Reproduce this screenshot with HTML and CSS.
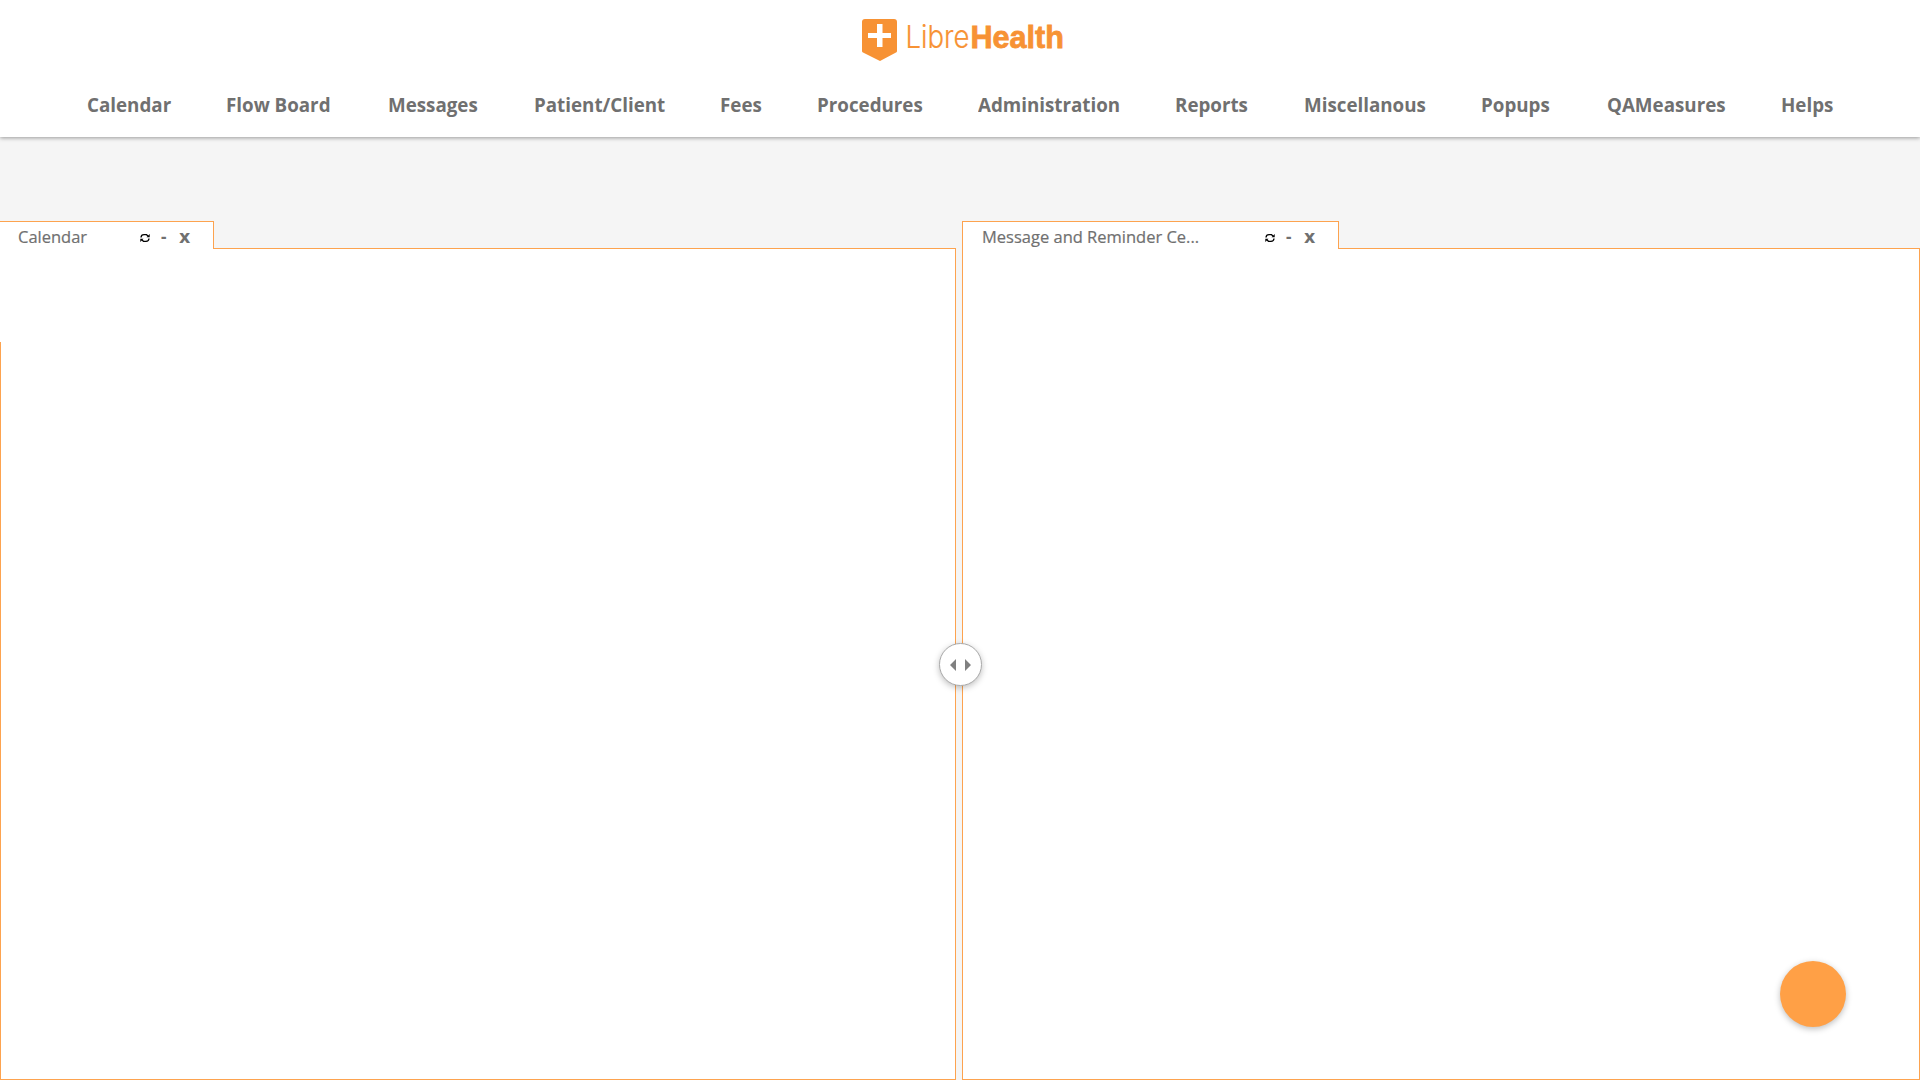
FILE: index.html
```html
<!DOCTYPE html>
<html lang="en">
<head>
<meta charset="utf-8">
<title>LibreHealth</title>
<link rel="stylesheet" href="styles.css">
</head>
<body>
<header class="header">
  <svg class="logo" viewBox="0 0 202 44" role="img" aria-label="LibreHealth">
    <path d="M3 1H32Q35 1 35 4V33Q35 34 34 34.500L18 43L1 34.500Q0 34 0 33V4Q0 1 3 1Z"/>
    <path class="logo-cross" d="M15 6H20.500V15H29V20H20.500V29H15V20H6V15H15Z"/>
    <text class="logo-light" x="43.500" y="29.500" textLength="64" lengthAdjust="spacingAndGlyphs">Libre</text>
    <text class="logo-bold" x="108.500" y="29.500" textLength="93.500" lengthAdjust="spacingAndGlyphs">Health</text>
  </svg>
  <nav class="nav">
    <a>Calendar</a><a>Flow Board</a><a>Messages</a><a>Patient/Client</a><a>Fees</a><a>Procedures</a><a>Administration</a><a>Reports</a><a>Miscellanous</a><a>Popups</a><a>QAMeasures</a><a>Helps</a>
  </nav>
</header>
<main class="workspace">
  <section class="pane pane-left">
    <div class="tab">
      <span class="title">Calendar</span>
      <svg class="refresh" viewBox="0 0 10 10"><path class="arc" d="M1 4.500Q1.200 1.700 4 1.700H6.500L8 3M9 5.500Q8.800 8.300 6 8.300H3.500L2 7"/><path d="M9.700 1V4.300H6.500ZM.3 9V5.700H3.500Z"/></svg>
      <span class="minimize">-</span><span class="close">x</span>
    </div>
    <div class="frame"></div>
  </section>
  <section class="pane pane-right">
    <div class="tab">
      <span class="title">Message and Reminder Ce...</span>
      <svg class="refresh" viewBox="0 0 10 10"><path class="arc" d="M1 4.500Q1.200 1.700 4 1.700H6.500L8 3M9 5.500Q8.800 8.300 6 8.300H3.500L2 7"/><path d="M9.700 1V4.300H6.500ZM.3 9V5.700H3.500Z"/></svg>
      <span class="minimize">-</span><span class="close">x</span>
    </div>
    <div class="frame"></div>
  </section>
</main>
<div class="splitter"><svg viewBox="0 0 21 12"><path d="M6 0V12L0 6ZM15 0V12L21 6Z"/></svg></div>
<div class="fab"></div>
</body>
</html>
```
FILE: styles.css
```css
* { box-sizing: border-box; }
body {
  margin: 0;
  height: 1080px;
  overflow: hidden;
  display: flex;
  flex-direction: column;
  position: relative;
  background: #f5f5f5;
  color: #707070;
  font-family: "Open Sans", "Noto Sans", sans-serif;
}
.header {
  height: 137px;
  flex: none;
  background: #fff;
  box-shadow: 0 1px 4px rgba(0, 0, 0, .38);
  padding-top: 18px;
}
.logo { display: block; width: 202px; height: 44px; margin-left: 862px; fill: #f79234; overflow: visible; }
.logo .logo-cross { fill: #fff; }
.logo text { font-family: "Liberation Sans", sans-serif; font-size: 32px; }
.logo .logo-light { font-family: Inter, sans-serif; font-size: 31.5px; font-weight: 300; stroke: #f79234; stroke-width: .2px; }
.logo-bold { font-weight: 700; stroke: #f79234; stroke-width: .8px; }
.nav {
  display: grid;
  grid-template-columns: 83px 106px 90px 130px 41px 105px 141px 73px 121px 70px 118px 53px;
  column-gap: 56px;
  padding-left: 87px;
  margin-top: 28px;
  font-size: 20px;
  font-weight: 700;
  line-height: 30px;
  white-space: nowrap;
}
.nav a { justify-self: start; transform: scaleX(.938); transform-origin: left; }
.workspace { flex: 1; display: flex; gap: 6px; padding-top: 84px; }
.pane { display: flex; flex-direction: column; }
.pane-left { width: 956px; }
.pane-right { width: 958px; }
.tab {
  height: 28px;
  margin-bottom: -1px;
  z-index: 1;
  display: flex;
  align-items: flex-start;
  background: #fff;
  border: 1px solid #fda34f;
  border-bottom: 0;
  font-size: 17px;
  line-height: 30px;
  white-space: nowrap;
}
.pane-left .tab { width: 214px; border-left: 0; padding-left: 18px; }
.pane-right .tab { width: 377px; padding-left: 19px; }
.title { transform: scaleX(.97); transform-origin: left; -webkit-text-stroke: .2px #707070; }
.pane-left .title { width: 122px; }
.pane-right .title { width: 283px; }
.refresh { width: 10px; height: 10px; margin-top: 11px; fill: #000; }
.refresh .arc { fill: none; stroke: #000; stroke-width: 1.3; }
.minimize { width: 18px; margin-left: 11px; font-weight: 700; }
.close { font-family: "DejaVu Sans", sans-serif; font-weight: 700; font-size: 17.5px; }
.frame { flex: 1; background: #fff; border: 1px solid #fda34f; }
.pane-left .frame {
  border-left: 0;
  background: linear-gradient(#fda34f, #fda34f) 0 93px / 1px 100% no-repeat #fff;
}
.splitter {
  position: absolute;
  z-index: 2;
  left: 939px;
  top: 643px;
  width: 43px;
  height: 43px;
  display: flex;
  align-items: center;
  justify-content: center;
  border: 1px solid #aaa;
  border-radius: 50%;
  background: #fff;
  box-shadow: 0 2px 6px rgba(0, 0, 0, .25);
}
.splitter svg { width: 21px; height: 12px; fill: #808080; }
.fab {
  position: absolute;
  z-index: 2;
  left: 1780px;
  top: 961px;
  width: 66px;
  height: 66px;
  border-radius: 50%;
  background: #ffa046;
  box-shadow: 0 2px 6px rgba(0, 0, 0, .26);
}
```
